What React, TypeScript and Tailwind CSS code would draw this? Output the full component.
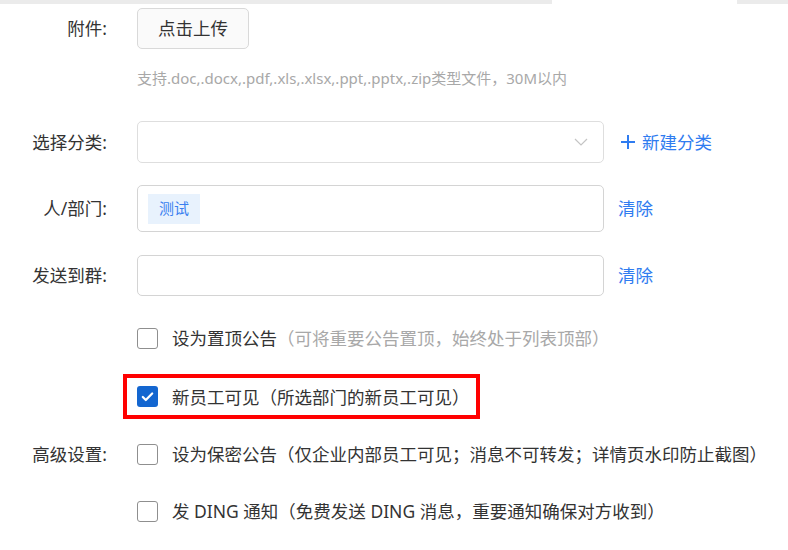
import React from 'react';

const labelCls = 'w-[137px] shrink-0 pr-[30px] text-right text-[#333]';

const Checkbox: React.FC<{ checked?: boolean }> = ({ checked }) =>
  checked ? (
    <span className="flex h-[21px] w-[21px] shrink-0 items-center justify-center rounded-[3px] bg-[#1366d0]">
      <svg width="15" height="15" viewBox="0 0 16 16" fill="none">
        <path d="M3 8.5l3.2 3.2L13 4.8" stroke="#fff" strokeWidth="2.4" strokeLinecap="round" strokeLinejoin="round" />
      </svg>
    </span>
  ) : (
    <span className="h-[21px] w-[21px] shrink-0 rounded-[3px] border border-[#8f8f8f] bg-white" />
  );

const CheckRow: React.FC<{ checked?: boolean; title: string; note: string; noteGray?: boolean }> = ({
  checked,
  title,
  note,
  noteGray,
}) => (
  <div className="flex items-center gap-[14px] leading-[22px]">
    <Checkbox checked={checked} />
    <span className="whitespace-nowrap text-[#333]">
      {title}
      <span className={noteGray ? 'text-[#a8a8a8]' : 'text-[#333]'}>{note}</span>
    </span>
  </div>
);

export default function App() {
  return (
    <div className="h-[550px] w-[788px] overflow-hidden bg-white font-[Noto_Sans,Noto_Sans_CJK_SC,sans-serif] text-[17.5px]">
      {/* top strip */}
      <div className="flex h-[4px]">
        <div className="w-[552px] bg-[#ebebeb]" />
        <div className="w-[185px] bg-white" />
        <div className="flex-1 bg-[#ebebeb]" />
      </div>

      {/* attachment */}
      <div className="mt-[4px] flex items-center">
        <div className={labelCls}>附件:</div>
        <button
          type="button"
          className="h-[41px] w-[112px] rounded-[5px] border border-[#d9d9d9] bg-[#fafafa] text-[17.5px] text-[#333]"
        >
          点击上传
        </button>
      </div>
      <div className="mt-[18px] flex leading-[22px]">
        <div className="w-[137px] shrink-0" />
        <div className="whitespace-nowrap text-[15px] text-[#a8a8a8]">
          支持.doc,.docx,.pdf,.xls,.xlsx,.ppt,.pptx,.zip类型文件，30M以内
        </div>
      </div>

      {/* category */}
      <div className="mt-[32px] flex items-center">
        <div className={labelCls}>选择分类:</div>
        <div className="flex h-[42px] w-[467px] items-center justify-end rounded-[5px] border border-[#dedede] pr-[15px]">
          <svg width="14" height="8" viewBox="0 0 14 8" fill="none">
            <path d="M1 1l6 6 6-6" stroke="#c4c4c4" strokeWidth="1.2" />
          </svg>
        </div>
        <div className="ml-[16px] flex items-center gap-[6px] text-[#2f7cf0]">
          <svg width="16" height="16" viewBox="0 0 16 16" fill="none">
            <path d="M8 1v14M1 8h14" stroke="#2f7cf0" strokeWidth="2" />
          </svg>
          <span>新建分类</span>
        </div>
      </div>

      {/* people */}
      <div className="mt-[22px] flex items-center">
        <div className={labelCls}>人/部门:</div>
        <div className="flex h-[47px] w-[467px] items-center rounded-[5px] border border-[#d4d4d4] pl-[10px]">
          <span className="flex h-[30px] items-center bg-[#e8f2fd] px-[11px] text-[15px] text-[#3a7ff0]">测试</span>
        </div>
        <div className="ml-[14px] text-[#2f7cf0]">清除</div>
      </div>

      {/* group */}
      <div className="mt-[23px] flex items-center">
        <div className={labelCls}>发送到群:</div>
        <div className="h-[41px] w-[467px] rounded-[5px] border border-[#d4d4d4]" />
        <div className="ml-[14px] text-[#2f7cf0]">清除</div>
      </div>

      {/* options */}
      <div className="mt-[31px] flex">
        <div className="w-[137px] shrink-0" />
        <CheckRow title="设为置顶公告" note="（可将重要公告置顶，始终处于列表顶部）" noteGray />
      </div>

      <div className="mt-[25px] flex">
        <div className="w-[123px] shrink-0" />
        <div className="flex h-[45px] w-[357px] items-center border-4 border-[#ff0000] pl-[10px]">
          <CheckRow checked title="新员工可见" note="（所选部门的新员工可见）" />
        </div>
      </div>

      <div className="mt-[22px] flex items-center">
        <div className={labelCls}>高级设置:</div>
        <CheckRow title="设为保密公告" note="（仅企业内部员工可见；消息不可转发；详情页水印防止截图）" />
      </div>

      <div className="mt-[33px] flex items-center">
        <div className="w-[137px] shrink-0" />
        <CheckRow title="发 DING 通知" note="（免费发送 DING 消息，重要通知确保对方收到）" />
      </div>
    </div>
  );
}
